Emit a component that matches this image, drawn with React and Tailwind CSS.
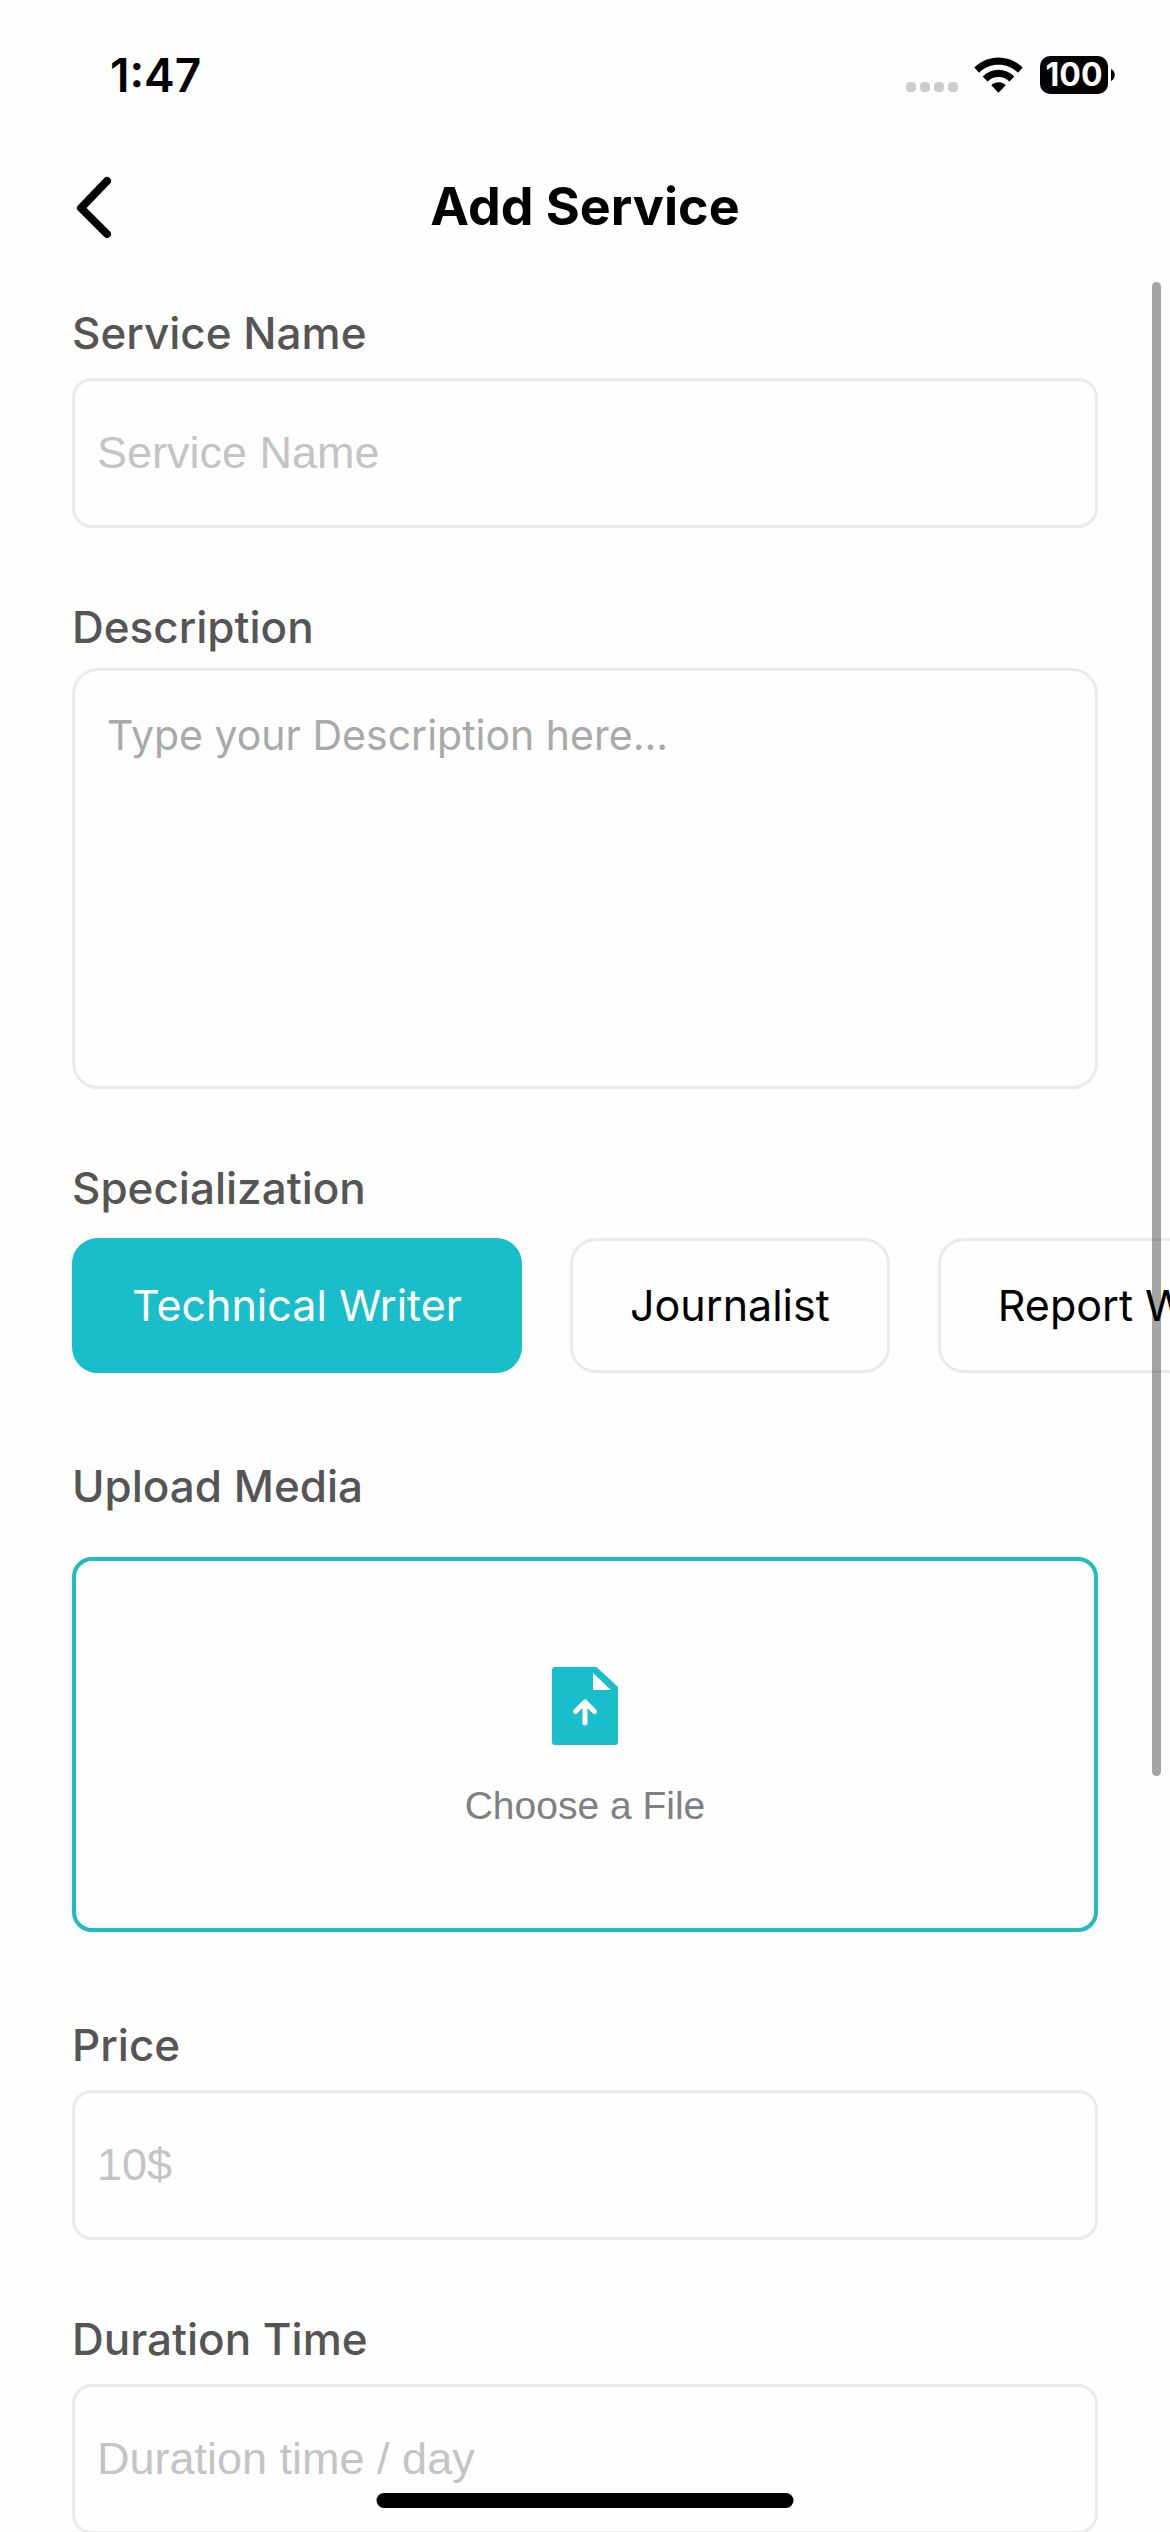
import { useState } from "react";

const specializations = ["Technical Writer", "Journalist", "Report Writer"];

const labelClass = "block text-[44px] leading-[54px] font-medium text-[#555555]";
const inputClass =
  "block h-[150px] w-full rounded-[20px] border-[3px] border-[#ebebeb] bg-transparent px-[22px] font-['Liberation_Sans',sans-serif] text-[45px] text-black outline-none placeholder:text-[#c4c4c4] placeholder:opacity-100";

function StatusBar() {
  return (
    <div className="flex h-[141px] shrink-0 items-center justify-between pr-[55px] pl-[110px] pt-[8px]">
      <span className="text-[46px] leading-[54px] font-semibold">1:47</span>
      <div className="flex items-center">
        <div className="mr-[16px] flex gap-[4px] self-end pb-[2px]">
          <span className="size-[10px] rounded-[4px] bg-[#cccccc]" />
          <span className="size-[10px] rounded-[4px] bg-[#cccccc]" />
          <span className="size-[10px] rounded-[4px] bg-[#cccccc]" />
          <span className="size-[10px] rounded-[4px] bg-[#cccccc]" />
        </div>
        <svg viewBox="0 0 49 36" className="mr-[17px] h-[36px] w-[49px]" aria-label="Wi-Fi">
          <path d="M0.3 10.6C13.5-3 35.5-3 48.7 10.6L43.9 15.7C33.2 5.1 15.8 5.1 5.1 15.7Z" />
          <path d="M8.7 19.4C17.5 10.6 31.5 10.6 40.3 19.4L35.5 24.4C29.3 18.5 19.7 18.5 13.5 24.4Z" />
          <path d="M17.3 28.2C21.3 24.4 27.7 24.4 31.7 28.2L24.5 35.8Z" />
        </svg>
        <div className="flex h-[38px] w-[68px] items-center justify-center rounded-[10px] bg-black text-[32px] leading-[38px] font-bold text-white">
          100
        </div>
        <svg viewBox="0 0 4 12" className="ml-[3px] h-[12px] w-[4px]" aria-hidden="true">
          <path d="M0 0C5 2 5 10 0 12Z" />
        </svg>
      </div>
    </div>
  );
}

function Header() {
  return (
    <header className="grid h-[141px] shrink-0 grid-cols-[1fr_auto_1fr] items-center px-[72px] pb-[10px]">
      <button type="button" aria-label="Back" className="w-[44px]">
        <svg viewBox="0 0 44 64" className="h-[64px] w-[44px]" fill="none" stroke="black" strokeWidth="8" strokeLinecap="round" strokeLinejoin="round">
          <path d="M35 6L9 33L35 59" />
        </svg>
      </button>
      <h1 className="text-[52px] leading-[64px] font-bold">Add Service</h1>
    </header>
  );
}

function Field({ id, label, placeholder }) {
  return (
    <div className="flex flex-col gap-[18px]">
      <label htmlFor={id} className={labelClass}>{label}</label>
      <input id={id} type="text" placeholder={placeholder} className={inputClass} />
    </div>
  );
}

export default function App() {
  const [selected, setSelected] = useState("Technical Writer");
  return (
    <div className="relative flex h-screen flex-col overflow-hidden bg-[#fefefe] font-['Inter',sans-serif] text-black">
      <StatusBar />
      <Header />
      <main className="min-h-0 flex-1 overflow-x-hidden overflow-y-auto px-[72px] pt-[24px] pb-[120px] [scrollbar-width:none]">
        <form className="flex flex-col gap-[72px]">
          <Field id="service-name" label="Service Name" placeholder="Service Name" />

          <div className="flex flex-col gap-[14px]">
            <label htmlFor="description" className={labelClass}>Description</label>
            <textarea
              id="description"
              placeholder="Type your Description here..."
              className="block h-[421px] w-full resize-none rounded-[26px] border-[3px] border-[#ebebeb] bg-transparent px-[32px] py-[38px] text-[41px] leading-[52px] outline-none placeholder:text-[#a9a9a9] placeholder:opacity-100"
            />
          </div>

          <div className="flex flex-col gap-[23px]">
            <span id="specialization" className={labelClass}>Specialization</span>
            <div role="group" aria-labelledby="specialization" className="-mr-[72px] flex gap-[48px] overflow-x-auto [scrollbar-width:none]">
              {specializations.map((name) => (
                <button
                  key={name}
                  type="button"
                  aria-pressed={selected === name}
                  onClick={() => setSelected(name)}
                  className={
                    selected === name
                      ? "h-[135px] shrink-0 rounded-[26px] border-[3px] border-[#1abdca] bg-[#1abdca] px-[57px] text-[43px] text-white"
                      : "h-[135px] shrink-0 rounded-[26px] border-[3px] border-[#ebebeb] px-[57px] text-[43px] text-black"
                  }
                >
                  {name}
                </button>
              ))}
            </div>
          </div>

          <div className="mt-[14px] flex flex-col gap-[44px]">
            <span id="upload-media" className={labelClass}>Upload Media</span>
            <label className="relative flex h-[375px] cursor-pointer flex-col items-center justify-center gap-[38px] rounded-[20px] border-[4px] border-[#22bbbf] pt-[6px]">
              <input type="file" aria-labelledby="upload-media" className="sr-only" />
              <svg viewBox="0 0 66 78" className="h-[78px] w-[66px]" aria-hidden="true">
                <path fill="#1abdca" fillRule="evenodd" d="M3 0H44.500L66 20V75Q66 78 63 78H3Q0 78 0 75V3Q0 0 3 0ZM41 6V23H59Z" />
                <path fill="none" stroke="white" strokeWidth="5" strokeLinecap="round" strokeLinejoin="round" d="M33 56V35M23.500 44.500L33 35L42.500 44.500" />
              </svg>
              <span className="font-['Liberation_Sans',sans-serif] text-[39px] leading-[46px] text-[#808080]">Choose a File</span>
            </label>
          </div>

          <div className="mt-[14px]">
            <Field id="price" label="Price" placeholder="10$" />
          </div>
          <Field id="duration" label="Duration Time" placeholder="Duration time / day" />
        </form>
      </main>
      <div className="absolute top-[282px] right-[9px] h-[1494px] w-[9px] rounded-full bg-black/35" />
      <div className="absolute bottom-[24px] left-1/2 h-[15px] w-[417px] -translate-x-1/2 rounded-full bg-black" />
    </div>
  );
}
